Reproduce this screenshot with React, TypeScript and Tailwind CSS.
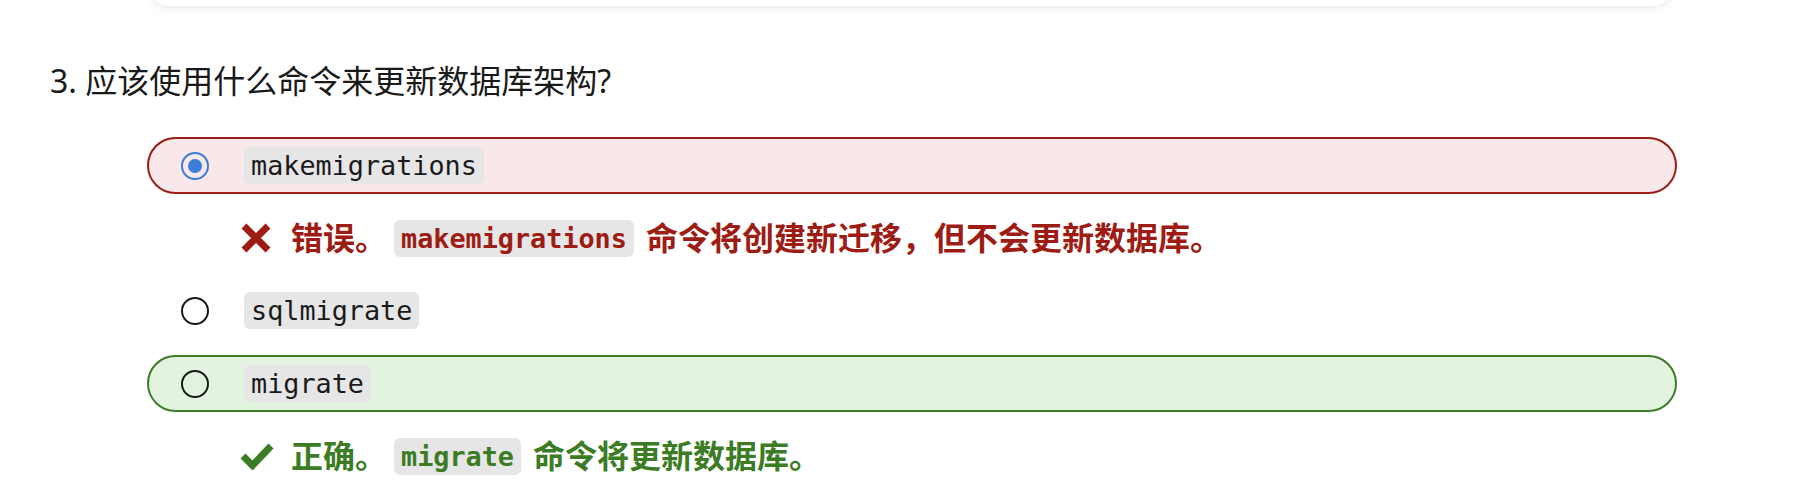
import React from "react";

const sans = { fontFamily: '"Noto Sans", "Noto Sans CJK SC", sans-serif' };

function Code({ children, bold, color }: { children: React.ReactNode; bold?: boolean; color?: string }) {
  return (
    <code
      className={`inline-block h-[37px] rounded-[6px] bg-[#e6e6e6] px-[7px] text-[26.8px] leading-[37px] ${bold ? "font-bold" : "font-normal"} ${color ?? "text-[#1a1a1a]"}`}
      style={{ fontFamily: '"DejaVu Sans Mono", monospace' }}
    >
      {children}
    </code>
  );
}

function Radio({ checked }: { checked?: boolean }) {
  if (checked) {
    return (
      <span className="flex h-[28px] w-[28px] shrink-0 items-center justify-center rounded-full border-2 border-[#3b7dd8]">
        <span className="h-[14px] w-[14px] rounded-full bg-[#3b7dd8]" />
      </span>
    );
  }
  return <span className="h-[28px] w-[28px] shrink-0 rounded-full border-2 border-[#1a1a1a]" />;
}

function Option({ label, checked, tone }: { label: string; checked?: boolean; tone?: "wrong" | "right" }) {
  const box =
    tone === "wrong"
      ? "border-[#9d1c14] bg-[#f8e8ea]"
      : tone === "right"
      ? "border-[#3d7d2a] bg-[#e2f3df]"
      : "border-transparent";
  return (
    <div className={`flex h-[57px] items-center rounded-full border-2 pl-[32px] ${box}`}>
      <Radio checked={checked} />
      <span className="ml-[35px]">
        <Code>{label}</Code>
      </span>
    </div>
  );
}

function Cross() {
  return (
    <svg width="30" height="30" viewBox="0 0 30 30" className="shrink-0">
      <path d="M3 3 L27 27 M27 3 L3 27" stroke="#9d1c14" strokeWidth="7" strokeLinecap="butt" />
    </svg>
  );
}

function Check() {
  return (
    <svg width="34" height="28" viewBox="0 0 34 28" className="shrink-0">
      <path d="M3 14 L12.5 23.5 L31 4" stroke="#3b7c24" strokeWidth="7" fill="none" strokeLinejoin="miter" />
    </svg>
  );
}

function Feedback({ tone, lead, code, rest }: { tone: "wrong" | "right"; lead: string; code: string; rest: string }) {
  const color = tone === "wrong" ? "text-[#9d1c14]" : "text-[#3b7c24]";
  return (
    <div className={`flex h-[56px] items-center ${tone === "wrong" ? "pl-[94px]" : "pl-[93px]"} ${color}`}>
      {tone === "wrong" ? <Cross /> : <Check />}
      <span className={`${tone === "wrong" ? "ml-[20px]" : "ml-[17px]"} text-[32px] font-bold leading-[44px]`} style={sans}>
        {lead}
      </span>
      <span className="ml-[7px]">
        <Code bold color={color}>{code}</Code>
      </span>
      <span className="ml-[12px] text-[32px] font-bold leading-[44px]" style={sans}>
        {rest}
      </span>
    </div>
  );
}

export default function App() {
  return (
    <div className="h-[496px] w-full overflow-hidden bg-white">
      <div className="ml-[150px] mt-[-34px] h-[40px] w-[1522px] rounded-[22px] bg-white shadow-[0_2px_8px_rgba(0,0,0,0.09)]" />

      <h3 className="ml-[50px] mt-[53px] text-[32px] font-normal leading-[44px] text-[#1a1a1a]" style={sans}>
        3. 应该使用什么命令来更新数据库架构?
      </h3>

      <div className="ml-[147px] mt-[34px] flex w-[1530px] flex-col gap-[16px]">
        <Option label="makemigrations" checked tone="wrong" />
        <Feedback tone="wrong" lead="错误。" code="makemigrations" rest="命令将创建新迁移，但不会更新数据库。" />
        <Option label="sqlmigrate" />
        <Option label="migrate" tone="right" />
        <Feedback tone="right" lead="正确。" code="migrate" rest="命令将更新数据库。" />
      </div>
    </div>
  );
}
